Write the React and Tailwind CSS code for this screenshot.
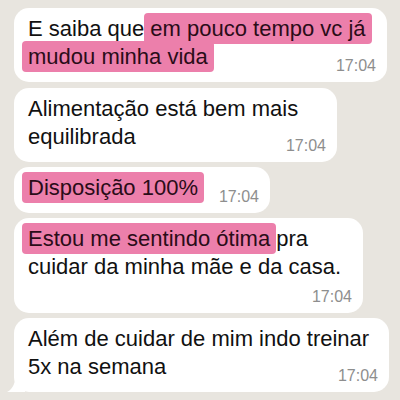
import React from "react";

const Mark = ({ children, className = "" }) => (
  <span
    className={`bg-[#ec7fab] text-[#2a0c18] rounded-[4px] box-decoration-clone -mx-[6px] px-[6px] py-[3px] ${className}`}
  >
    {children}
  </span>
);

const Time = ({ className = "" }) => (
  <span className={`text-[16px] leading-[16px] text-[#8e8e8e] shrink-0 ${className}`}>
    17:04
  </span>
);

const Bubble = ({ width, children, stacked, tail }) => (
  <div
    className={`relative shrink-0 bg-white rounded-[15px] pt-[7px] pb-[11px] pl-[14px] pr-[11px] flex ${
      stacked ? "flex-col" : "items-end justify-between"
    } ${width}`}
  >
    {children}
    {tail && (
      <svg
        className="absolute -left-[9px] bottom-0"
        width="20"
        height="18"
        viewBox="0 0 20 18"
      >
        <path d="M20 0 L20 18 L2 18 C6 16 9 12 10 6 Z" fill="#ffffff" />
      </svg>
    )}
  </div>
);

const Text = ({ children }) => (
  <p className="min-w-0 whitespace-nowrap text-[22px] leading-[28px]">{children}</p>
);

export default function App() {
  return (
    <div
      className="w-[400px] h-[400px] overflow-hidden bg-[#e8e5df] flex flex-col gap-[5px] pt-[8px] pl-[14px] text-[#111111]"
      style={{ fontFamily: '"Liberation Sans", Arial, sans-serif' }}
    >
      <Bubble width="w-[373px]">
        <Text>
          E saiba que <Mark>em pouco tempo vc já</Mark>
          <br />
          <Mark>mudou minha vida</Mark>
        </Text>
        <Time className="-mb-[3px]" />
      </Bubble>

      <Bubble width="w-[323px] mt-[1px]">
        <Text>
          Alimentação está bem mais
          <br />
          equilibrada
        </Text>
        <Time className="-mb-[3px]" />
      </Bubble>

      <Bubble width="w-[256px]">
        <Text>
          <Mark>Disposição 100%</Mark>
        </Text>
        <Time className="-mb-[3px]" />
      </Bubble>

      <Bubble width="w-[349px]" stacked>
        <Text>
          <Mark>Estou me sentindo ótima</Mark> pra
          <br />
          cuidar da minha mãe e da casa.
        </Text>
        <Time className="self-end mt-[8px] mb-[-3px]" />
      </Bubble>

      <Bubble width="w-[375px]" tail>
        <Text>
          Além de cuidar de mim indo treinar
          <br />
          5x na semana
        </Text>
        <Time className="-mb-[3px]" />
      </Bubble>
    </div>
  );
}
